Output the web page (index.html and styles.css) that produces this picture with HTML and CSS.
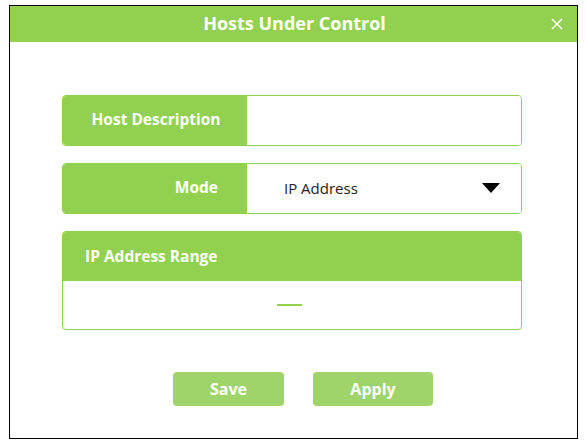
FILE: index.html
```html
<!DOCTYPE html>
<html>
<head>
<meta charset="utf-8">
<link rel="stylesheet" href="styles.css">
</head>
<body>
<div class="frame">
  <div class="header">
    <span class="title">Hosts Under Control</span>
    <svg class="close" width="12" height="12" viewBox="0 0 12 12"><path d="M1 1 L11 11 M11 1 L1 11" stroke="#fff" stroke-width="1.6" fill="none"/></svg>
  </div>
  <div class="content">
    <div class="row">
      <div class="label center">Host Description</div>
      <div class="value"></div>
    </div>
    <div class="row">
      <div class="label right">Mode</div>
      <div class="value select">
        <span>IP Address</span>
        <svg class="caret" width="18" height="10" viewBox="0 0 18 10"><polygon points="0,0 18,0 9,10" fill="#000"/></svg>
      </div>
    </div>
    <div class="range">
      <div class="range-head">IP Address Range</div>
      <div class="range-body"><span class="dash"></span></div>
    </div>
    <div class="buttons">
      <button class="btn save">Save</button>
      <button class="btn apply">Apply</button>
    </div>
  </div>
</div>
</body>
</html>
```
FILE: styles.css
```css
html, body { margin: 0; padding: 0; background: #fff; }
body { font-family: "Open Sans", "Liberation Sans", sans-serif; }
.frame {
  margin: 5px 0 0 9px;
  width: 567px;
  height: 432px;
  border: 1px solid #000;
  background: #fff;
}
.header {
  height: 36px;
  background: #91d14f;
  display: flex;
  align-items: center;
  justify-content: center;
  position: relative;
}
.title {
  color: #fff;
  font-weight: 700;
  font-size: 18px;
  margin-left: 2px;
  padding-bottom: 2px;
}
.close {
  position: absolute;
  right: 14px;
  top: 12px;
}
.content {
  padding: 53px 55px 0 52px;
  display: flex;
  flex-direction: column;
}
.row {
  display: flex;
  height: 49px;
  border: 1px solid #8fd04c;
  border-radius: 4px;
  overflow: hidden;
  margin-bottom: 17px;
}
.label {
  width: 184px;
  background: #91d14f;
  color: #fff;
  font-weight: 700;
  font-size: 15.5px;
  display: flex;
  align-items: center;
  padding-bottom: 3px;
  box-sizing: border-box;
}
.label.center { justify-content: center; padding-left: 2px; }
.label.right { justify-content: flex-end; padding-right: 29px; }
.value { flex: 1; background: #fff; }
.select {
  display: flex;
  align-items: center;
  justify-content: space-between;
  padding: 0 21px 2px 37px;
  font-size: 15px;
  color: #222;
}
.caret { margin-top: 1px; }
.range {
  border: 1px solid #8fd04c;
  border-radius: 4px;
  overflow: hidden;
}
.range-head {
  height: 49px;
  background: #91d14f;
  color: #fff;
  font-weight: 700;
  font-size: 15.5px;
  display: flex;
  align-items: center;
  padding-left: 22px;
  padding-bottom: 2px;
  box-sizing: border-box;
}
.range-body {
  height: 48px;
  display: flex;
  align-items: center;
  justify-content: center;
}
.dash {
  width: 25px;
  height: 2px;
  background: #91d14f;
  margin-left: -5px;
}
.buttons {
  display: flex;
  justify-content: center;
  gap: 29px;
  margin-top: 42px;
  padding-left: 22px;
}
.btn {
  height: 34px;
  border: none;
  border-radius: 4px;
  background: #9fd46a;
  color: #fff;
  font-family: "Open Sans", "Liberation Sans", sans-serif;
  font-weight: 700;
  font-size: 16px;
  padding: 0;
}
.save { width: 111px; }
.apply { width: 120px; }
```
